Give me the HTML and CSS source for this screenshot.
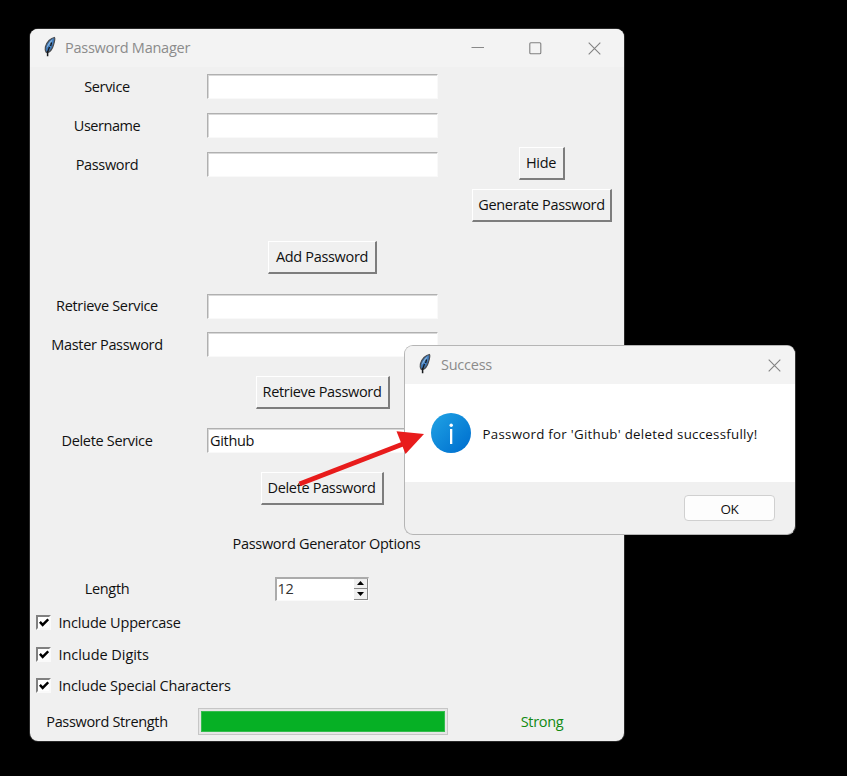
FILE: index.html
```html
<!DOCTYPE html>
<html lang="en">
<head>
<meta charset="utf-8">
<title>Password Manager</title>
<link rel="stylesheet" href="styles.css">
</head>
<body>
<svg width="0" height="0" class="defs">
  <symbol id="feather" viewBox="0 0 14 22">
    <path d="M11.500 1.500 C8 1.800 3.500 6 2.400 11 C2 13 2.200 14.500 3 16 L4.500 16.800 C7.500 15.500 9.300 13 10.300 9.500 C11.200 6.500 12.500 3 11.500 1.500Z" fill="#3f77b5" stroke="#4a4c50" stroke-width="1.200"/>
    <path d="M10 3.200 C7 4.800 4.300 8.500 3.700 12 L5 10.500 L8.600 5.500Z" fill="#8bb9e2"/>
    <path d="M10.300 4 L9 8.500 L5.600 13.500 L6.600 9.500Z" fill="#4a8ad0"/>
    <path d="M8.600 6.500 L7.600 10 M6.500 11 L4.800 15.500" fill="none" stroke="#15181c" stroke-width="1.300"/>
    <path d="M4.600 15 V20.300" fill="none" stroke="#15181c" stroke-width="1.500"/>
  </symbol>
  <symbol id="close" viewBox="0 0 13 13"><path d="M.7.7 12.300 12.300M12.300.7.7 12.300" fill="none" stroke="#828282" stroke-width="1.100"/></symbol>
</svg>

<main class="window">
  <header class="titlebar">
    <svg class="feather"><use href="#feather"/></svg>
    <span class="title">Password Manager</span>
    <span class="controls">
      <svg width="13" height="13"><path d="M.5 5.500H13" stroke="#888" fill="none"/></svg>
      <svg width="13" height="13"><rect x=".8" y=".8" width="11" height="11" rx="1" stroke="#808080" stroke-width="1.100" fill="none"/></svg>
      <svg width="13" height="13"><use href="#close"/></svg>
    </span>
  </header>
  <div class="form">
    <label>Service</label><input class="entry"><i></i>
    <label class="l-user">Username</label><input class="entry"><i></i>
    <label>Password</label><input class="entry"><button class="btn b-hide">Hide</button>
    <i></i><i></i><button class="btn b-gen">Generate Password</button>
    <i></i><button class="btn b-add">Add Password</button><i></i>
    <label>Retrieve Service</label><input class="entry"><i></i>
    <label>Master Password</label><input class="entry"><i></i>
    <i></i><button class="btn b-ret">Retrieve Password</button><i></i>
    <label>Delete Service</label><input class="entry" value="Github"><i></i>
    <i></i><button class="btn b-del">Delete Password</button><i></i>
    <span class="heading">Password Generator Options</span>
    <label>Length</label>
    <div class="spin"><span>12</span>
      <div class="arrows">
        <b><svg width="7" height="4"><path d="M0 4 3.500 0 7 4Z"/></svg></b>
        <b><svg width="7" height="4"><path d="M0 0 3.500 4 7 0Z"/></svg></b>
      </div>
    </div><i></i>
    <div class="check"><span class="box"><svg viewBox="0 0 9 9"><path d="M.8 3.500 3.300 6.200 8.300 1.200"/></svg></span><span>Include Uppercase</span></div>
    <div class="check c-digits"><span class="box"><svg viewBox="0 0 9 9"><path d="M.8 3.500 3.300 6.200 8.300 1.200"/></svg></span><span>Include Digits</span></div>
    <div class="check"><span class="box"><svg viewBox="0 0 9 9"><path d="M.8 3.500 3.300 6.200 8.300 1.200"/></svg></span><span>Include Special Characters</span></div>
    <label>Password Strength</label>
    <div class="meter"><div class="fill"></div></div>
    <span class="strong">Strong</span>
  </div>
</main>

<section class="dialog">
  <header class="titlebar">
    <svg class="feather"><use href="#feather"/></svg>
    <span class="title">Success</span>
    <svg class="x" width="13" height="13"><use href="#close"/></svg>
  </header>
  <div class="message">
    <svg width="40" height="40" viewBox="0 0 40 40">
      <defs><linearGradient id="blue" x1="0" y1="0" x2="1" y2="1"><stop offset=".1" stop-color="#1d9ee2"/><stop offset=".9" stop-color="#0071d0"/></linearGradient></defs>
      <circle cx="20" cy="20" r="20" fill="url(#blue)"/>
      <circle cx="20.200" cy="12.300" r="1.700" fill="#fff"/>
      <rect x="19" y="16" width="2.300" height="15" fill="#fff"/>
    </svg>
    <p>Password for 'Github' deleted successfully!</p>
  </div>
  <footer><button class="ok">OK</button></footer>
</section>

<svg class="pointer" width="126" height="58" viewBox="0 0 126 58">
  <path d="M1.500 54 105 14" stroke="#e81c1c" stroke-width="4.800" fill="none"/>
  <path d="M98.500 1.200 126 4 107.500 24Z" fill="#e81c1c"/>
</svg>
</body>
</html>
```
FILE: styles.css
```css
* { box-sizing: border-box; }
body {
  margin: 0;
  width: 847px;
  height: 776px;
  overflow: hidden;
  background: #000;
  padding: 29px 30px;
  color: #111;
  font: 14.5px/20px "Open Sans", "Noto Sans", sans-serif;
  letter-spacing: -0.33px;
}
.defs { position: absolute; }
input, button { font: inherit; letter-spacing: inherit; color: inherit; }

.window {
  width: 594px;
  height: 712px;
  background: #f0f0f0;
  border-radius: 8px;
  overflow: hidden;
  box-shadow: 0 0 0 1px #292929;
}
.titlebar {
  height: 38px;
  background: #f3f3f3;
  display: flex;
  align-items: center;
  padding-left: 13px;
  color: #8b8b8b;
  letter-spacing: -0.25px;
}
.feather { width: 14px; height: 22px; margin-top: -2px; }
.title { margin-left: 8px; }
.controls { margin-left: auto; display: flex; gap: 45.5px; padding-right: 23.5px; }

.form {
  display: grid;
  grid-template-columns: 154px 277px 163px;
  grid-template-rows: 39px 39px 39px 43px 60px 38px 39px 57px 39px 56px 55px 35px 34px 30px 32px 39px;
  place-items: center;
}
.l-user { letter-spacing: -0.45px; }
.entry {
  width: 231px;
  height: 25px;
  padding: 0 1px;
  background: #fff;
  border: solid;
  border-color: #b0b0b0 #f9f9f9 #f9f9f9 #b0b0b0;
  border-width: 1px;
  border-radius: 0;
  box-shadow: inset 1px 1px #d8d8d8;
  text-indent: 1px;
}
.btn {
  height: 33px;
  padding: 0;
  white-space: nowrap;
  background: #f0f0f0;
  border: 2px solid;
  border-color: #fff #7d7d7d #7d7d7d #fff;
  border-width: 1px 2px 2px 1px;
  border-radius: 0;
}
.b-hide { width: 46px; margin: 0 2px 2px 0; }
.b-gen { width: 140px; margin-right: 1px; }
.b-add { width: 109px; }
.b-ret { width: 134px; }
.b-del { width: 123px; margin-right: 1px; }
.heading { grid-column: 1 / 4; padding-right: 1px; letter-spacing: -0.31px; }

.spin {
  width: 94px;
  height: 24px;
  display: flex;
  justify-content: space-between;
  align-items: center;
  margin-right: 2px;
  padding-left: 1px;
  background: #fff;
  border: solid;
  border-width: 2px 1px 1px 2px;
  border-color: #ababab #fafafa #fafafa #ababab;
}
.spin > span { color: #333; }
.arrows b {
  width: 14px;
  height: 10.5px;
  display: flex;
  align-items: center;
  justify-content: center;
  background: #f0f0f0;
  border: solid;
  border-width: 0 1px 1px 0;
  border-color: #888;
}
.check {
  grid-column: 1 / 4;
  justify-self: start;
  display: flex;
  align-items: center;
  gap: 7.5px;
  padding-left: 6px;
  letter-spacing: -0.2px;
}
.c-digits { letter-spacing: -0.05px; }
.box {
  width: 15px;
  height: 15px;
  margin-bottom: 1px;
  background: #fff;
  border: 2px solid;
  border-color: #808080 #fafafa #fafafa #808080;
  display: flex;
  align-items: center;
  justify-content: center;
}
.box svg { width: 10px; height: 10px; }
.box path { fill: none; stroke: #000; stroke-width: 2.200; }
.meter {
  width: 250px;
  height: 27px;
  padding: 2px;
  border: 1px solid #c6c6c6;
  background: #e6e6e6;
}
.fill { height: 100%; background: #06b025; border: 1px solid #35bd4e; }
.strong { color: #128a12; margin-right: 1px; }

.dialog {
  position: absolute;
  left: 404px;
  top: 345px;
  width: 392px;
  height: 190px;
  border: 1px solid #b5b5b5;
  border-right-color: #333;
  border-radius: 9px;
  overflow: hidden;
  background: #f0f0f0;
}
.dialog .title { margin-left: 9px; }
.x { margin-left: auto; margin-right: 14.5px; }
.message {
  height: 98px;
  background: #fff;
  display: flex;
  align-items: center;
  gap: 11.5px;
  padding-left: 26px;
}
.message p { margin: 2px 0 0; font-size: 13.3px; letter-spacing: 0.27px; white-space: nowrap; }
footer { display: flex; justify-content: flex-end; padding: 13px 20px; }
.ok {
  width: 91px;
  height: 26px;
  padding: 1px 0 0;
  font-size: 13.500px;
  background: #fdfdfd;
  border: 1px solid #d0d0d0;
  border-radius: 4px;
}
.pointer { position: absolute; left: 298px; top: 430px; }
```
